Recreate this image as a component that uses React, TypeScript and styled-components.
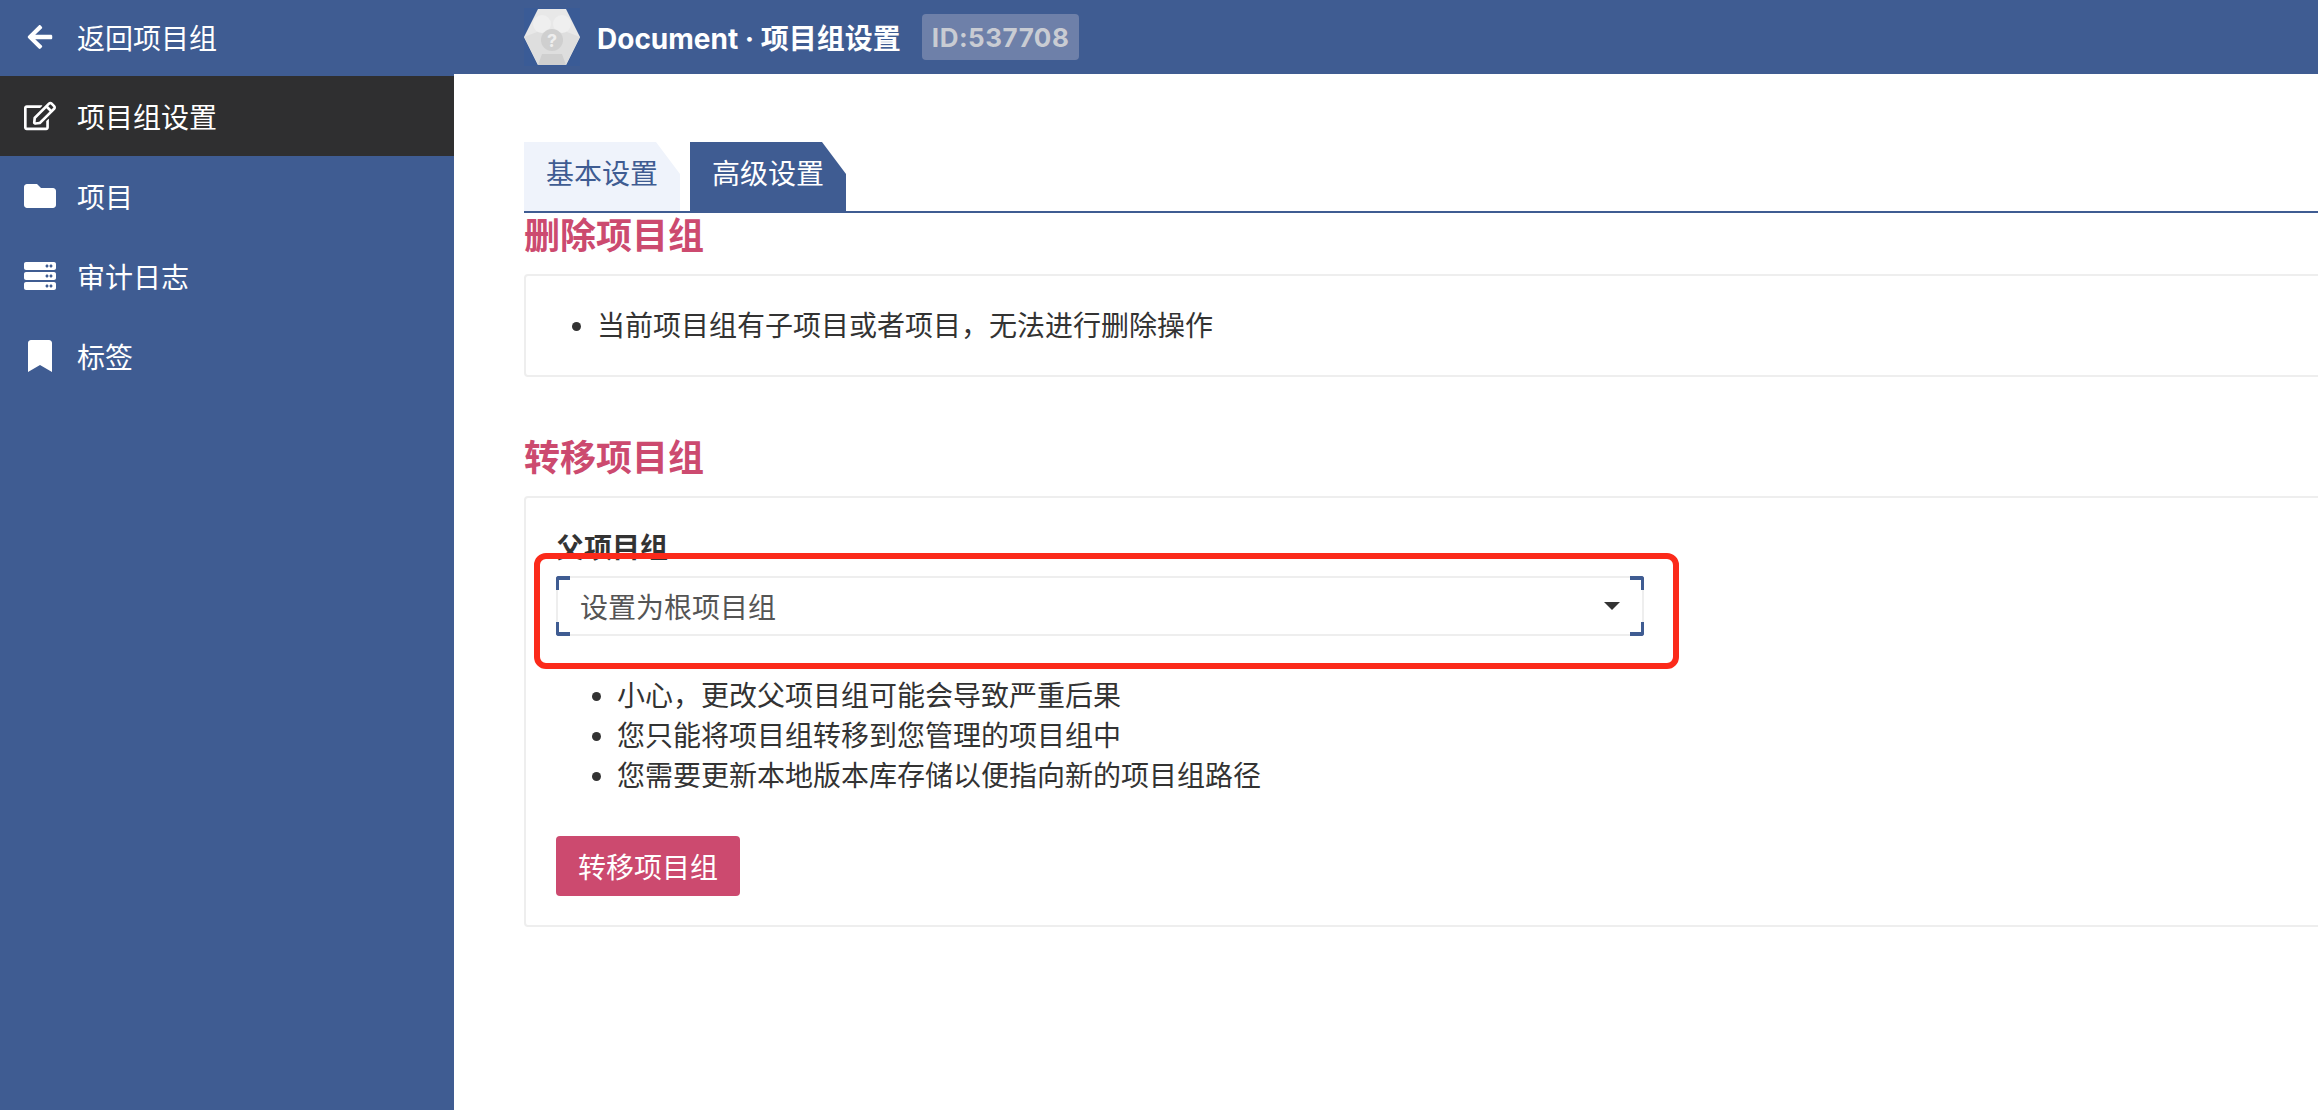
import styled, { createGlobalStyle } from "styled-components";
import {
  FaArrowLeft,
  FaBookmark,
  FaFolder,
  FaRegEdit,
  FaServer,
} from "react-icons/fa";

const GlobalStyle = createGlobalStyle`
  html, body {
    margin: 0;
    padding: 0;
    background: #fff;
  }
  body {
    font-family: "Inter", "Noto Sans CJK SC", sans-serif;
    color: #333;
  }
`;

const Page = styled.div`
  display: flex;
  width: 2318px;
  height: 1110px;
  overflow: hidden;
`;

const Sidebar = styled.nav`
  flex: 0 0 454px;
  background: #3f5c92;
  color: #fff;
`;

const NavItem = styled.div<{ $active?: boolean; $back?: boolean }>`
  display: flex;
  align-items: center;
  height: ${(p) => (p.$back ? "76px" : "80px")};
  background: ${(p) => (p.$active ? "#2f2f30" : "transparent")};
  font-size: 28px;
  padding-bottom: ${(p) => (p.$back ? "3px" : "0")};
  box-sizing: border-box;
`;

const NavIcon = styled.span`
  display: flex;
  justify-content: center;
  align-items: center;
  width: 32px;
  margin-left: 24px;
  margin-right: 21px;
  font-size: 32px;
`;

const Main = styled.div`
  flex: 1;
  min-width: 0;
  overflow: hidden;
`;

const Header = styled.header`
  display: flex;
  align-items: center;
  height: 74px;
  padding-left: 70px;
  background: #3f5c92;
  color: #fff;
`;

const Logo = styled.svg`
  width: 56px;
  height: 58px;
  margin-right: 17px;
`;

const Title = styled.div`
  font-size: 28px;
  font-weight: 700;
  white-space: nowrap;
`;

const IdBadge = styled.span`
  display: flex;
  align-items: center;
  height: 46px;
  margin-left: 21px;
  padding: 0 10px;
  border-radius: 4px;
  background: #6e80a9;
  color: #c9ccd3;
  font-size: 26px;
  font-weight: 700;
  letter-spacing: 0.5px;
`;

const Content = styled.main`
  width: 1900px;
  padding: 68px 0 0 70px;
`;

const Tabs = styled.div`
  display: flex;
  gap: 10px;
  border-bottom: 2px solid #3f5c92;
`;

const Tab = styled.div<{ $active?: boolean }>`
  width: 156px;
  height: 69px;
  box-sizing: border-box;
  padding-top: 12px;
  text-align: center;
  font-size: 28px;
  line-height: 40px;
  background: ${(p) => (p.$active ? "#3f5c92" : "#eff3fb")};
  color: ${(p) => (p.$active ? "#fff" : "#3f5c92")};
  clip-path: polygon(0 0, 132px 0, 100% 32px, 100% 100%, 0 100%);
`;

const SectionTitle = styled.h2<{ $spaced?: boolean }>`
  margin: ${(p) => (p.$spaced ? "58px" : "0")} 0 15px;
  font-size: 36px;
  line-height: 46px;
  font-weight: 700;
  color: #cc4a6f;
`;

const Card = styled.section`
  position: relative;
  padding: 30px 30px 29px;
  border: 2px solid #eee;
  border-radius: 4px;
`;

const BulletList = styled.ul<{ $indent: number }>`
  margin: 0;
  padding: 0 0 0 ${(p) => p.$indent}px;
  font-size: 28px;
  line-height: 40px;
  color: #333;
`;

const FieldLabel = styled.label`
  display: block;
  margin-bottom: 8px;
  font-size: 28px;
  line-height: 40px;
  font-weight: 700;
  color: #333;
`;

const Select = styled.div`
  position: relative;
  display: flex;
  align-items: center;
  justify-content: space-between;
  width: 1088px;
  height: 60px;
  box-sizing: border-box;
  margin-bottom: 40px;
  padding: 0 22px;
  border: 2px solid #eee;
  border-radius: 4px;
  color: #555;
  font-size: 28px;
`;

const Caret = styled.span`
  width: 0;
  height: 0;
  border-left: 8px solid transparent;
  border-right: 8px solid transparent;
  border-top: 8px solid #333;
`;

const Corner = styled.span<{ $v: "top" | "bottom"; $h: "left" | "right" }>`
  position: absolute;
  ${(p) => p.$v}: -2px;
  ${(p) => p.$h}: -2px;
  width: 14px;
  height: 14px;
  box-sizing: border-box;
  border-${(p) => p.$v}: 4px solid #3f5c92;
  border-${(p) => p.$h}: 3px solid #3f5c92;
  border-${(p) => p.$v}-${(p) => p.$h}-radius: 3px;
`;

const DangerButton = styled.button`
  display: block;
  width: 184px;
  height: 60px;
  margin-top: 40px;
  padding: 0;
  border: 0;
  border-radius: 4px;
  background: #cc4a6f;
  color: #fff;
  font-family: inherit;
  font-size: 28px;
`;

const Highlight = styled.div`
  position: absolute;
  top: 55px;
  left: 8px;
  width: 1145px;
  height: 116px;
  box-sizing: border-box;
  border: 6px solid #fb2a1a;
  border-radius: 12px;
  pointer-events: none;
`;

const navItems = [
  { label: "项目组设置", icon: <FaRegEdit />, active: true },
  { label: "项目", icon: <FaFolder /> },
  { label: "审计日志", icon: <FaServer /> },
  { label: "标签", icon: <FaBookmark /> },
];

const GroupLogo = () => (
  <Logo viewBox="0 0 56 58">
    <rect width="56" height="58" fill="#3a5b96" />
    <polygon points="14,1 42,1 56,29 42,57 14,57 0,29" fill="#e8e8e8" />
    <path d="M0 29 L18 22 L38 22 L56 29 L42 57 L14 57 Z" fill="#dedede" />
    <circle cx="18" cy="16" r="9" fill="#efefef" />
    <circle cx="38" cy="16" r="9" fill="#efefef" />
    <circle cx="28" cy="32" r="11" fill="#cfcfcf" />
    <path d="M14 57 L18 46 L38 46 L42 57 Z" fill="#cfcfcf" />
    <text
      x="28"
      y="39"
      textAnchor="middle"
      fontSize="18"
      fontWeight="700"
      fill="#eeeeee"
      fontFamily="Inter, sans-serif"
    >
      ?
    </text>
  </Logo>
);

export default function App() {
  return (
    <>
      <GlobalStyle />
      <Page>
        <Sidebar>
          <NavItem $back>
            <NavIcon>
              <FaArrowLeft size={28} />
            </NavIcon>
            返回项目组
          </NavItem>
          {navItems.map((item) => (
            <NavItem key={item.label} $active={item.active}>
              <NavIcon>{item.icon}</NavIcon>
              {item.label}
            </NavItem>
          ))}
        </Sidebar>
        <Main>
          <Header>
            <GroupLogo />
            <Title>Document · 项目组设置</Title>
            <IdBadge>ID:537708</IdBadge>
          </Header>
          <Content>
            <Tabs>
              <Tab>基本设置</Tab>
              <Tab $active>高级设置</Tab>
            </Tabs>
            <SectionTitle>删除项目组</SectionTitle>
            <Card>
              <BulletList $indent={41}>
                <li>当前项目组有子项目或者项目，无法进行删除操作</li>
              </BulletList>
            </Card>
            <SectionTitle $spaced>转移项目组</SectionTitle>
            <Card>
              <FieldLabel>父项目组</FieldLabel>
              <Select>
                设置为根项目组
                <Caret />
                <Corner $v="top" $h="left" />
                <Corner $v="top" $h="right" />
                <Corner $v="bottom" $h="left" />
                <Corner $v="bottom" $h="right" />
              </Select>
              <BulletList $indent={61}>
                <li>小心，更改父项目组可能会导致严重后果</li>
                <li>您只能将项目组转移到您管理的项目组中</li>
                <li>您需要更新本地版本库存储以便指向新的项目组路径</li>
              </BulletList>
              <DangerButton>转移项目组</DangerButton>
              <Highlight />
            </Card>
          </Content>
        </Main>
      </Page>
    </>
  );
}
